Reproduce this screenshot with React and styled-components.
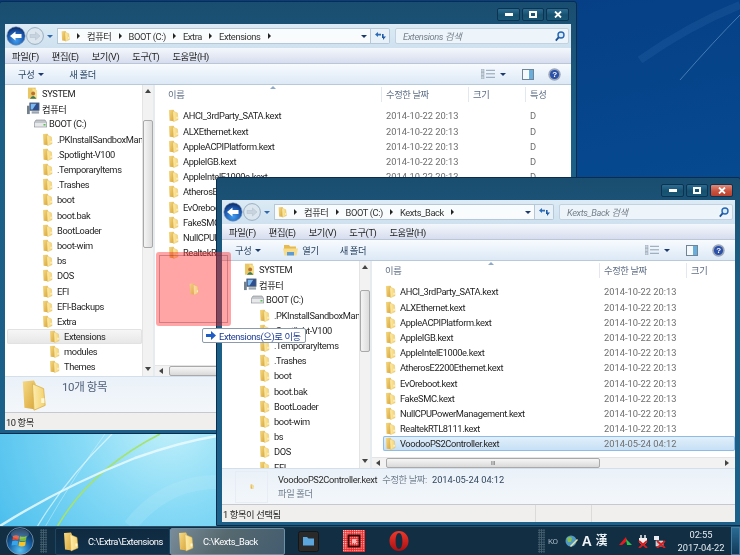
import React from 'react';
import styled, { createGlobalStyle } from 'styled-components';

const GlobalStyle = createGlobalStyle`
  html, body { margin: 0; padding: 0; background: #10304a; }
  body { font-family: Roboto, "Noto Sans CJK KR", sans-serif; font-size: 9.3px; letter-spacing: -0.38px; color: #1e1e1e; }
  * { box-sizing: border-box; }
  svg { display: block; flex: none; }
`;

const Desktop = styled.div`
  width: 740px;
  height: 555px;
  display: flex;
  flex-direction: column;
  overflow: hidden;
  filter: blur(0.3px);
`;

const Wallpaper = styled.div`
  position: relative;
  flex: 1;
  background:
    radial-gradient(circle 380px at 170px 420px, #c4f1fb 0%, #86daf6 24%, #45bcec 56%, #2aa8e2 74%, rgba(20, 130, 205, 0) 100%),
    linear-gradient(170deg, #063a80 0%, #06498f 45%, #0561b6 100%);
`;

const WallpaperArt = styled.svg`
  position: absolute;
  inset: 0;
`;

const WindowFrame = styled.section`
  position: absolute;
  left: ${(p) => p.$left}px;
  top: ${(p) => p.$top}px;
  width: ${(p) => p.$width}px;
  height: ${(p) => p.$height}px;
  display: flex;
  flex-direction: column;
  padding: 0 5px 3px;
  background: linear-gradient(180deg, #1a4e70 0%, #1c5f86 30%, #1b6089 100%);
  border: 1px solid #0b2c4c;
  border-radius: 3px 3px 0 0;
`;

const TitleBar = styled.div`
  height: 22px;
  flex: none;
  display: flex;
  justify-content: flex-end;
  align-items: flex-start;
  gap: 2px;
  padding: 6px 2px 0 0;
`;

const CaptionButton = styled.div`
  width: ${(p) => (p.$wide ? 23 : 22)}px;
  height: 13px;
  display: flex;
  align-items: center;
  justify-content: center;
  border: 1px solid #0d3350;
  border-radius: 2px;
  color: #fff;
  background: ${(p) =>
    p.$danger
      ? 'linear-gradient(180deg, #e08a7a 0%, #c9533f 55%, #b9402c 100%)'
      : 'linear-gradient(180deg, #2c6d92 0%, #17506f 55%, #1a5777 100%)'};
`;

const AddressRow = styled.div`
  height: 24px;
  flex: none;
  display: flex;
  align-items: center;
  padding: 0 2px 0 0;
  background: linear-gradient(180deg, #dcebf5 0%, #cfe1ef 100%);
`;

const NavButtons = styled.div`
  width: 52px;
  flex: none;
  display: flex;
  align-items: center;
  padding-left: 1px;
`;

const AddressField = styled.div`
  flex: 1;
  height: 16px;
  display: flex;
  align-items: center;
  gap: 7px;
  padding: 0 3px 0 3px;
  background: rgba(255, 255, 255, 0.85);
  border: 1px solid #b6c8d8;
  color: #333;
  overflow: hidden;
`;

const Crumb = styled.span`
  white-space: nowrap;
`;

const CrumbArrow = styled.i`
  width: 0;
  height: 0;
  border-left: 3px solid #222;
  border-top: 3px solid transparent;
  border-bottom: 3px solid transparent;
`;

const Spacer = styled.div`
  flex: 1;
`;

const DropTriangle = styled.i`
  width: 0;
  height: 0;
  flex: none;
  margin-left: ${(p) => p.$gap || 0}px;
  border-top: 3px solid ${(p) => p.$color || '#1c3a6e'};
  border-left: 3px solid transparent;
  border-right: 3px solid transparent;
`;

const RefreshButton = styled.div`
  width: 19px;
  height: 16px;
  flex: none;
  display: flex;
  align-items: center;
  justify-content: center;
  background: #e8f1f8;
  border: 1px solid #b6c8d8;
  border-left: 0;
  border-radius: 0 2px 2px 0;
`;

const SearchField = styled.div`
  width: 174px;
  height: 16px;
  flex: none;
  display: flex;
  align-items: center;
  justify-content: space-between;
  margin-left: 5px;
  padding: 0 3px 0 7px;
  background: #eef5fa;
  border: 1px solid #c2d2e0;
  border-radius: 2px;
  color: #77818c;
  font-style: italic;
`;

const MenuBar = styled.nav`
  height: 16px;
  flex: none;
  display: flex;
  align-items: center;
  gap: 13px;
  padding-left: 7px;
  background: linear-gradient(180deg, #f4f7fc 0%, #d7ddee 100%);
  border-bottom: 1px solid #b9c7d8;
  color: #222;
`;

const Toolbar = styled.div`
  height: 21px;
  flex: none;
  display: flex;
  align-items: center;
  padding: 0 10px 0 13px;
  background: linear-gradient(180deg, #f8fbfe 0%, #dce9f6 100%);
  border-bottom: 1px solid #b8c9da;
  color: #2b4563;
`;

const ToolItem = styled.div`
  display: flex;
  align-items: center;
  gap: 4px;
  margin-right: ${(p) => p.$gap}px;
`;

const ToolIcons = styled.div`
  margin-left: auto;
  display: flex;
  align-items: center;
  gap: 5px;
`;

const PaneIconWrap = styled.div`
  margin-left: 11px;
  margin-right: 9px;
  display: flex;
`;

const Body = styled.div`
  flex: 1;
  min-height: 0;
  display: flex;
  background: #fff;
`;

const NavPane = styled.div`
  width: 137px;
  flex: none;
  overflow: hidden;
  padding-top: 1px;
`;

const NavRow = styled.div`
  height: 15.2px;
  display: flex;
  align-items: center;
  margin-left: 2px;
  padding-left: ${(p) => p.$indent - 2}px;
  white-space: nowrap;
  border-radius: 2px;
  background: ${(p) => (p.$selected ? 'linear-gradient(180deg, #f7f7f7, #e6e6e6)' : 'transparent')};
  box-shadow: ${(p) => (p.$selected ? 'inset 0 0 0 1px #e2e2e2' : 'none')};
`;

const IconSlot = styled.span`
  width: 15px;
  height: 14px;
  flex: none;
  display: flex;
  align-items: center;
`;

const VScroll = styled.div`
  width: 11px;
  flex: none;
  display: flex;
  flex-direction: column;
  background: #f2f2f2;
  border-left: 1px solid #e4e4e4;
`;

const ScrollCap = styled.div`
  flex: none;
  height: 13px;
  display: flex;
  align-items: center;
  justify-content: center;
`;

const VTrack = styled.div`
  flex: 1;
  padding-top: ${(p) => p.$offset}px;
`;

const VThumb = styled.div`
  height: ${(p) => p.$length}px;
  background: linear-gradient(90deg, #f4f4f4, #dcdcdc);
  border: 1px solid #a9a9a9;
  border-radius: 2px;
`;

const Splitter = styled.div`
  width: 2px;
  flex: none;
  background: #e6ebf0;
`;

const ListPane = styled.div`
  flex: 1;
  min-width: 0;
  display: flex;
  flex-direction: column;
`;

const ListHeader = styled.div`
  height: 23.4px;
  flex: none;
  display: grid;
  grid-template-columns: ${(p) => p.$columns};
  align-items: start;
  color: #5f6f85;
`;

const HeaderCell = styled.div`
  position: relative;
  height: 15px;
  margin-top: 2px;
  line-height: 15px;
  padding-left: ${(p) => (p.$first ? 13 : 4)}px;
  border-left: ${(p) => (p.$first ? '0' : '1px solid #e3e8f0')};
`;

const SortArrow = styled.i`
  position: absolute;
  top: -1px;
  left: 50%;
  margin-left: 2px;
  width: 0;
  height: 0;
  border-bottom: 3px solid #8fa9c9;
  border-left: 3px solid transparent;
  border-right: 3px solid transparent;
`;

const FileRows = styled.div`
  flex: 1;
  min-height: 0;
  overflow: hidden;
`;

const FileRow = styled.div`
  height: 15.2px;
  display: grid;
  grid-template-columns: ${(p) => p.$columns};
  align-items: center;
  margin-left: 11px;
  padding-left: 2px;
  white-space: nowrap;
  background: ${(p) => (p.$selected ? 'linear-gradient(180deg, #e3f0fb, #c5dff5)' : 'transparent')};
  box-shadow: ${(p) => (p.$selected ? 'inset 0 0 0 1px #8fbce4' : 'none')};
  border-radius: 2px;
`;

const NameCell = styled.div`
  display: flex;
  align-items: center;
  overflow: hidden;
`;

const DimCell = styled.div`
  padding-left: 5px;
  color: #6e6e6e;
  letter-spacing: 0;
`;

const HScroll = styled.div`
  height: 11px;
  flex: none;
  display: flex;
  align-items: stretch;
  background: #f2f2f2;
  border-top: 1px solid #e4e4e4;
`;

const HTrack = styled.div`
  flex: 1;
  display: flex;
`;

const HThumb = styled.div`
  width: ${(p) => p.$length}px;
  background: linear-gradient(180deg, #f6f6f6, #d9d9d9);
  border: 1px solid #a9a9a9;
  border-radius: 2px;
  text-align: center;
  line-height: 7px;
  font-size: 6px;
  color: #666;
`;

const HCap = styled.div`
  width: 14px;
  flex: none;
  display: flex;
  align-items: center;
  justify-content: center;
`;

const DetailsPane = styled.div`
  height: 37px;
  flex: none;
  display: flex;
  align-items: center;
  background: linear-gradient(180deg, #eaf1f8 0%, #f3f7fb 100%);
  border-top: 1px solid #d5dfe9;
  border-bottom: 1px solid #c4c9ce;
`;

const Thumb = styled.div`
  width: 57px;
  height: 100%;
  flex: none;
  display: flex;
  align-items: center;
  justify-content: center;
`;

const TinyThumb = styled.div`
  width: 33px;
  height: 32px;
  margin-left: 13px;
  margin-right: 10px;
  flex: none;
  display: flex;
  align-items: center;
  justify-content: center;
  border: 1px solid #e6edf4;
`;

const DetailTitle = styled.div`
  display: flex;
  gap: 5px;
  color: ${(p) => p.$color || '#2b2b2b'};
  font-size: ${(p) => p.$size || 9.3}px;
  margin-bottom: ${(p) => p.$space || 0}px;
`;

const DetailText = styled.div`
  display: flex;
  flex-direction: column;
  gap: 2px;
  line-height: 12px;
`;

const Dim = styled.span`
  color: #74808f;
`;

const Fact = styled.span`
  color: #33475f;
  letter-spacing: 0;
`;

const StatusBar = styled.div`
  height: 17px;
  flex: none;
  display: grid;
  grid-template-columns: ${(p) => p.$columns};
  align-items: stretch;
  background: #f0efed;
  color: #222;
`;

const StatusCell = styled.div`
  display: flex;
  align-items: center;
  padding-left: 1px;
  border-left: ${(p) => (p.$line ? '1px solid #dcdbd8' : '0')};
`;

const DragGhost = styled.div`
  position: absolute;
  left: 156px;
  top: 252px;
  width: 75px;
  height: 74px;
  padding: 3px;
  background: rgba(255, 40, 40, 0.42);
  border-radius: 3px;
`;

const DragGhostInner = styled.div`
  width: 100%;
  height: 100%;
  display: flex;
  align-items: center;
  justify-content: center;
  border: 1px solid rgba(110, 40, 50, 0.4);
  opacity: 0.8;
`;

const DragTip = styled.div`
  position: absolute;
  left: 202px;
  top: 328px;
  height: 15px;
  padding: 0 4px 0 3px;
  display: flex;
  align-items: center;
  gap: 3px;
  white-space: nowrap;
  color: #1b3a96;
  background: #fff;
  border: 1px solid #8b9bab;
  border-radius: 2px;
`;

const Taskbar = styled.footer`
  height: 29px;
  flex: none;
  display: flex;
  align-items: center;
  background: #122e43;
  border-top: 1px solid #26506c;
  color: #fff;
`;

const StartOrb = styled.div`
  width: 40px;
  flex: none;
  display: flex;
  justify-content: center;
`;

const Gripper = styled.div`
  width: 7px;
  height: 24px;
  flex: none;
  background-image: radial-gradient(circle, #46606f 0.8px, transparent 1px);
  background-size: 2.4px 2.4px;
`;

const TaskButton = styled.div`
  width: 115px;
  height: 27px;
  flex: none;
  display: flex;
  align-items: center;
  gap: 9px;
  padding-left: 7px;
  border: 1px solid ${(p) => (p.$active ? '#6d90a6' : '#1f4660')};
  border-radius: 2px;
  background: ${(p) =>
    p.$active
      ? 'linear-gradient(125deg, #7a8c99 0%, #56696f 45%, #435c70 100%)'
      : 'linear-gradient(180deg, #0f2a40 0%, #10304a 100%)'};
`;

const TaskButtons = styled.div`
  margin-left: 8px;
  display: flex;
`;

const PinnedApps = styled.div`
  margin-left: 13px;
  display: flex;
  gap: 24px;
  align-items: center;
`;

const Tray = styled.div`
  margin-left: auto;
  display: flex;
  align-items: center;
  height: 100%;
`;

const TrayIcons = styled.div`
  display: flex;
  align-items: center;
  margin-left: 3px;
  gap: 4px;
`;

const LangLabel = styled.span`
  font-size: 8px;
  color: #a9b8c4;
  margin-right: 3px;
`;

const LangGlyph = styled.span`
  font-family: "Liberation Sans", "Noto Sans CJK TC", sans-serif;
  font-weight: 700;
  font-size: ${(p) => p.$size}px;
  color: #eef3f7;
  line-height: 1;
`;

const TrayBreak = styled.span`
  width: 4px;
`;

const Clock = styled.div`
  width: 58px;
  margin-left: 6px;
  text-align: center;
  line-height: 13px;
  letter-spacing: 0;
  color: #e6edf2;
`;

const ShowDesktop = styled.div`
  width: 9px;
  height: 100%;
  margin-left: 1px;
  background: linear-gradient(180deg, #2a6a94 0%, #123a58 100%);
  border: 1px solid #3f7ea6;
`;

const FolderIcon = ({ w = 11, h = 13, id = 'f' }) => (
  <svg width={w} height={h} viewBox="0 0 16 20">
    <defs>
      <linearGradient id={`${id}b`} x1="0" y1="0" x2="1" y2="1">
        <stop offset="0" stopColor="#f5da85" />
        <stop offset="1" stopColor="#d9a63a" />
      </linearGradient>
      <linearGradient id={`${id}a`} x1="0" y1="0" x2="1" y2="0">
        <stop offset="0" stopColor="#fcedb0" />
        <stop offset="1" stopColor="#f4d06c" />
      </linearGradient>
    </defs>
    <path d="M1 1.5 L8 1 L9 3 L9 19 L2 18 Z" fill={`url(#${id}b)`} />
    <path d="M7 3 L14 6 L15 16.5 L8 19.5 Z" fill={`url(#${id}a)`} stroke="#d9b04b" strokeWidth="0.5" />
    <path d="M12.5 12 h2 v3 h-2 z" fill="#fff7d3" />
  </svg>
);

const SystemIcon = () => (
  <svg width="11" height="13" viewBox="0 0 16 20">
    <path d="M1 1 L13 1 L13 18 L1 18 Z" fill="#eac766" />
    <path d="M8 2 L15 5 L15 18 L8 19 Z" fill="#f7e08f" />
    <circle cx="9" cy="10" r="3" fill="#b8742e" />
    <path d="M4 18 Q9 10 14 18 Z" fill="#3e7a4e" />
  </svg>
);

const ComputerIcon = () => (
  <svg width="13" height="13" viewBox="0 0 14 14">
    <rect x="3" y="1" width="10" height="8" fill="#2f4e8e" stroke="#5a6a7a" strokeWidth="0.8" />
    <path d="M4 2 h6 l-4 6 h-2 z" fill="#7bb8ee" />
    <rect x="0" y="4" width="3" height="9" fill="#74808c" />
    <rect x="5" y="10" width="8" height="2.5" fill="#9aa5b0" />
  </svg>
);

const DriveIcon = () => (
  <svg width="13" height="9" viewBox="0 0 13 9">
    <path d="M2 1 h9 l2 3 v4 h-13 v-4 z" fill="#c3c7cb" stroke="#7f878e" strokeWidth="0.6" />
    <rect x="1" y="4" width="11" height="3.5" fill="#e6e8ea" />
    <rect x="9.5" y="5" width="2" height="1.5" fill="#55c24a" />
  </svg>
);

const BackButton = () => (
  <svg width="20" height="20" viewBox="0 0 20 20">
    <defs>
      <radialGradient id="backorb" cx="50%" cy="75%" r="70%">
        <stop offset="0" stopColor="#3f9cf0" />
        <stop offset="0.7" stopColor="#1a54a8" />
        <stop offset="1" stopColor="#0e2f6c" />
      </radialGradient>
    </defs>
    <circle cx="10" cy="10" r="9.2" fill="url(#backorb)" stroke="#7d97b5" strokeWidth="0.6" />
    <path d="M4 10 L9.5 5.5 V8 H15.5 V12 H9.5 V14.5 Z" fill="#fff" />
  </svg>
);

const ForwardButton = () => (
  <svg width="18" height="18" viewBox="0 0 18 18">
    <circle cx="9" cy="9" r="8.4" fill="#dbe6ef" stroke="#93a8bc" strokeWidth="0.9" />
    <path d="M14 9 L9.5 5 V7.5 H4 V10.5 H9.5 V13 Z" fill="#c7d4df" stroke="#a9b9c6" strokeWidth="0.4" />
  </svg>
);

const RefreshIcon = () => (
  <svg width="11" height="10" viewBox="0 0 11 10">
    <path d="M0 3.5 L3 1 V2.8 H6 V4.4 H3 V6 Z" fill="#2b6dbb" />
    <path d="M11 5.5 L8 9 V7 H7 V3 H8.6 V5.5 Z" fill="#1e5aa5" />
  </svg>
);

const SearchIcon = () => (
  <svg width="10" height="11" viewBox="0 0 10 11">
    <circle cx="6" cy="4" r="3" fill="#dcebf7" stroke="#2367b5" strokeWidth="1.4" />
    <path d="M3.6 6.4 L0.8 9.6" stroke="#1a4f94" strokeWidth="1.8" />
  </svg>
);

const OpenIcon = () => (
  <svg width="15" height="12" viewBox="0 0 15 12">
    <path d="M1 1 h5 l1 1.5 h6 v3 h-12 z" fill="#e7b94f" />
    <path d="M0 4.5 h15 l-1.5 7 h-12 z" fill="#f7dc8c" />
    <path d="M4 8 h7 v3.5 h-7 z" fill="#5b9bd8" />
  </svg>
);

const ViewsIcon = () => (
  <svg width="14" height="10" viewBox="0 0 14 10">
    {[0, 3.5, 7].map((y) => (
      <g key={y}>
        <rect x="0" y={y} width="3" height="3" fill="#c8d4de" stroke="#8f9eac" strokeWidth="0.5" />
        <rect x="5" y={y + 0.8} width="9" height="1" fill="#8ea0b2" />
      </g>
    ))}
  </svg>
);

const PreviewIcon = () => (
  <svg width="12" height="11" viewBox="0 0 12 11">
    <rect x="0.5" y="0.5" width="11" height="10" fill="#f5f9fc" stroke="#6f8496" />
    <rect x="7" y="1" width="4" height="9" fill="#69aeda" />
  </svg>
);

const HelpIcon = () => (
  <svg width="13" height="13" viewBox="0 0 13 13">
    <circle cx="6.5" cy="6.5" r="6.2" fill="#9aa6b8" />
    <circle cx="6.5" cy="6.5" r="4.6" fill="#2b50a8" />
    <text x="6.5" y="9.4" textAnchor="middle" fontSize="8" fontWeight="700" fontFamily="Liberation Sans, sans-serif" fill="#fff">?</text>
  </svg>
);

const ScrollTriangle = ({ dir }) => {
  const points = {
    up: '0,4 3,0 6,4',
    down: '0,0 6,0 3,4',
    left: '4,0 4,6 0,3',
    right: '0,0 0,6 4,3',
  };
  return (
    <svg width="6" height="6" viewBox="0 0 6 6">
      <polygon points={points[dir]} fill="#444" />
    </svg>
  );
};

const StartIcon = () => (
  <svg width="28" height="28" viewBox="0 0 28 28">
    <defs>
      <radialGradient id="orb" cx="50%" cy="85%" r="75%">
        <stop offset="0" stopColor="#58c1f0" />
        <stop offset="0.55" stopColor="#1763a8" />
        <stop offset="1" stopColor="#0a2c50" />
      </radialGradient>
    </defs>
    <circle cx="14" cy="14" r="13.4" fill="url(#orb)" stroke="#8fa9bc" strokeWidth="0.7" />
    <path d="M7 9 Q10 7.5 13 9 L12.4 13.4 Q9.6 12 6.4 13.4 Z" fill="#e2492d" />
    <path d="M14 9.2 Q17 10.6 20.6 9 L20 13.4 Q16.6 15 13.4 13.6 Z" fill="#7cba2d" />
    <path d="M6.2 14.2 Q9.4 12.8 12.2 14.2 L11.6 18.6 Q8.8 17.2 5.6 18.6 Z" fill="#3aa4e8" />
    <path d="M13.2 14.4 Q16.4 15.8 19.8 14.2 L19.2 18.6 Q16 20.2 12.6 18.8 Z" fill="#f6c32a" />
    <ellipse cx="14" cy="7" rx="9" ry="5" fill="#fff" opacity="0.18" />
  </svg>
);

const ExplorerPin = () => (
  <svg width="21" height="21" viewBox="0 0 21 21">
    <rect x="0.5" y="0.5" width="20" height="20" rx="2" fill="#2a2a2a" stroke="#161616" />
    <path d="M5 6 h4 l1.5 1.5 h5.5 v7 h-11 z" fill="#5ba6dc" />
  </svg>
);

const GridPin = () => (
  <svg width="22" height="22" viewBox="0 0 22 22">
    <defs>
      <pattern id="dots" width="2.2" height="2.2" patternUnits="userSpaceOnUse">
        <rect width="1.1" height="1.1" fill="#ffd8d8" />
      </pattern>
    </defs>
    <rect width="22" height="22" fill="#f02a2a" />
    <rect width="22" height="22" fill="url(#dots)" />
    <rect x="5.5" y="5.5" width="11" height="11" fill="none" stroke="#3a0808" strokeWidth="2" />
    <rect x="9" y="9" width="4" height="4" fill="#ffb4b4" />
  </svg>
);

const OperaPin = () => (
  <svg width="20" height="22" viewBox="0 0 20 22">
    <defs>
      <linearGradient id="opera" x1="0" y1="0" x2="0" y2="1">
        <stop offset="0" stopColor="#f0392c" />
        <stop offset="1" stopColor="#a90f12" />
      </linearGradient>
    </defs>
    <path
      fillRule="evenodd"
      d="M10 1 C15.5 1 19.5 5.5 19.5 11 C19.5 16.5 15.5 21 10 21 C4.5 21 0.5 16.5 0.5 11 C0.5 5.5 4.5 1 10 1 Z M10 3 C7.8 3 6.6 6.5 6.6 11 C6.6 15.5 7.8 19 10 19 C12.2 19 13.4 15.5 13.4 11 C13.4 6.5 12.2 3 10 3 Z"
      fill="url(#opera)"
    />
  </svg>
);

const GlobeTray = () => (
  <svg width="13" height="13" viewBox="0 0 13 13">
    <circle cx="6" cy="6" r="5.5" fill="#4f9ac4" />
    <path d="M2 3 Q5 1 7 3 L6 7 L3 7 Z" fill="#8cc04b" />
    <path d="M5 11 L12 4 L13 5 L6 12 Z" fill="#f3e3a2" />
  </svg>
);

const SignalTray = () => (
  <svg width="14" height="10" viewBox="0 0 14 10">
    <path d="M0 9 L7 1 L8 5 L3 9 Z" fill="#e8191d" />
    <path d="M7 3 L13 9 L8 9 Z" fill="#2bc24a" />
  </svg>
);

const PlugTray = () => (
  <svg width="12" height="13" viewBox="0 0 12 13">
    <path d="M4 0 v3 M8 0 v3" stroke="#fff" strokeWidth="1.4" />
    <path d="M2 3 h8 v4 l-2.5 2.5 h-3 l-2.5 -2.5 z" fill="#f2f2f2" />
    <path d="M2 6 L10 13 M10 6 L2 13" stroke="#e01c1c" strokeWidth="1.8" />
  </svg>
);

const NetTray = () => (
  <svg width="13" height="13" viewBox="0 0 13 13">
    <rect x="1" y="1" width="5" height="4" fill="#e8edf2" />
    <rect x="3" y="6" width="7" height="5" fill="#b9c7d2" stroke="#f1f5f8" strokeWidth="0.6" />
    <path d="M4 6 L12 13 M12 6 L4 13" stroke="#e01c1c" strokeWidth="1.8" />
  </svg>
);

const folderNames = ['.PKInstallSandboxMan', '.Spotlight-V100', '.TemporaryItems', '.Trashes', 'boot', 'boot.bak', 'BootLoader', 'boot-wim', 'bs', 'DOS', 'EFI'];

const backNav = [...folderNames, 'EFI-Backups', 'Extra'];

const kextNames = ['AHCI_3rdParty_SATA.kext', 'ALXEthernet.kext', 'AppleACPIPlatform.kext', 'AppleIGB.kext', 'AppleIntelE1000e.kext', 'AtherosE2200Ethernet.kext', 'EvOreboot.kext', 'FakeSMC.kext', 'NullCPUPowerManagement.kext', 'RealtekRTL8111.kext'];

const menus = ['파일(F)', '편집(E)', '보기(V)', '도구(T)', '도움말(H)'];

const ExplorerWindow = ({ id, box, active, crumbs, searchLabel, navChildren, navItems, thumbOffset, thumbLength, nameWidth, headers, files, hScroll, hasOpen, details, status, statusColumns }) => {
  const columns = `${nameWidth}px 87px 57px 1fr`;
  const rowColumns = `${nameWidth - 13}px 87px 57px 1fr`;

  return (
    <WindowFrame $left={box.left} $top={box.top} $width={box.width} $height={box.height}>
      <TitleBar>
        <CaptionButton $wide>
          <svg width="8" height="3"><rect width="8" height="3" fill="#fff" /></svg>
        </CaptionButton>
        <CaptionButton>
          <svg width="8" height="7"><rect x="1" y="1" width="6" height="5" fill="none" stroke="#fff" strokeWidth="2" /></svg>
        </CaptionButton>
        <CaptionButton $wide $danger={active}>
          <svg width="8" height="7"><path d="M1 0.5 L7 6.5 M7 0.5 L1 6.5" stroke="#fff" strokeWidth="1.8" /></svg>
        </CaptionButton>
      </TitleBar>
      <AddressRow>
        <NavButtons>
          <BackButton />
          <ForwardButton />
          <DropTriangle $color="#2d6ab0" $gap={3} />
        </NavButtons>
        <AddressField>
          <FolderIcon w={9} h={12} id={`${id}addr`} />
          {crumbs.map((crumb) => (
            <React.Fragment key={crumb}>
              <CrumbArrow />
              <Crumb>{crumb}</Crumb>
            </React.Fragment>
          ))}
          <CrumbArrow />
          <Spacer />
          <DropTriangle />
        </AddressField>
        <RefreshButton><RefreshIcon /></RefreshButton>
        <SearchField>
          <span>{searchLabel}</span>
          <SearchIcon />
        </SearchField>
      </AddressRow>
      <MenuBar>
        {menus.map((menu) => <span key={menu}>{menu}</span>)}
      </MenuBar>
      <Toolbar>
        <ToolItem $gap={hasOpen ? 22 : 25}>구성 <DropTriangle /></ToolItem>
        {hasOpen && <ToolItem $gap={21}><OpenIcon />열기</ToolItem>}
        <ToolItem $gap={0}>새 폴더</ToolItem>
        <ToolIcons>
          <ViewsIcon />
          <DropTriangle />
          <PaneIconWrap><PreviewIcon /></PaneIconWrap>
          <HelpIcon />
        </ToolIcons>
      </Toolbar>
      <Body>
        <NavPane>
          <NavRow $indent={22}><IconSlot><SystemIcon /></IconSlot>SYSTEM</NavRow>
          <NavRow $indent={22}><IconSlot><ComputerIcon /></IconSlot>컴퓨터</NavRow>
          <NavRow $indent={29}><IconSlot><DriveIcon /></IconSlot>BOOT (C:)</NavRow>
          {navItems.map((name) => (
            <NavRow key={name} $indent={37}>
              <IconSlot><FolderIcon id={`${id}n${name}`} /></IconSlot>{name}
            </NavRow>
          ))}
          {navChildren.map((child) => (
            <NavRow key={child.name} $indent={44} $selected={child.selected}>
              <IconSlot><FolderIcon id={`${id}c${child.name}`} /></IconSlot>{child.name}
            </NavRow>
          ))}
        </NavPane>
        <VScroll>
          <ScrollCap><ScrollTriangle dir="up" /></ScrollCap>
          <VTrack $offset={thumbOffset}><VThumb $length={thumbLength} /></VTrack>
          <ScrollCap><ScrollTriangle dir="down" /></ScrollCap>
        </VScroll>
        <Splitter />
        <ListPane>
          <ListHeader $columns={columns}>
            {headers.map((label, i) => (
              <HeaderCell key={label} $first={i === 0}>
                {label}
                {i === 0 && <SortArrow />}
              </HeaderCell>
            ))}
          </ListHeader>
          <FileRows>
            {files.map((file) => (
              <FileRow key={file.name} $columns={rowColumns} $selected={file.selected}>
                <NameCell><IconSlot><FolderIcon id={`${id}r${file.name}`} /></IconSlot>{file.name}</NameCell>
                <DimCell>{file.date}</DimCell>
                <DimCell />
                <DimCell>{file.attr}</DimCell>
              </FileRow>
            ))}
          </FileRows>
          <HScroll>
            <HCap><ScrollTriangle dir="left" /></HCap>
            <HTrack><HThumb $length={hScroll}>III</HThumb></HTrack>
            <HCap><ScrollTriangle dir="right" /></HCap>
          </HScroll>
        </ListPane>
      </Body>
      {details}
      <StatusBar $columns={statusColumns}>
        {status.map((text, i) => <StatusCell key={i} $line={i > 0}>{text}</StatusCell>)}
      </StatusBar>
    </WindowFrame>
  );
};

const backFiles = kextNames.map((name) => ({ name, date: '2014-10-22 20:13', attr: 'D' }));
const frontFiles = [
  ...kextNames.map((name) => ({ name, date: '2014-10-22 20:13' })),
  { name: 'VoodooPS2Controller.kext', date: '2014-05-24 04:12', selected: true },
];

export default function App() {
  return (
    <>
      <GlobalStyle />
      <Desktop>
        <Wallpaper>
          <WallpaperArt width="740" height="526" viewBox="0 0 740 526">
            <path d="M680 80 Q715 40 740 15" stroke="#5f93c8" strokeWidth="1" fill="none" opacity="0.7" />
            <path d="M640 60 Q690 25 740 5" stroke="#2f6cab" strokeWidth="8" fill="none" opacity="0.25" />
            <path d="M57 527 Q90 470 160 434" stroke="#a5e36a" strokeWidth="1.6" fill="none" />
            <path d="M0 526 Q60 488 135 458 Q180 442 217 436" stroke="#eafaff" strokeWidth="2.4" fill="none" opacity="0.85" />
            <path d="M37 527 Q65 480 112 434" stroke="#e8fbff" strokeWidth="1.2" fill="none" opacity="0.7" />
            <path d="M45 527 Q75 475 105 434" stroke="#e8fbff" strokeWidth="0.8" fill="none" opacity="0.5" />
            <path d="M130 526 Q165 482 217 482" stroke="#c8f1fb" strokeWidth="14" fill="none" opacity="0.2" />
          </WallpaperArt>
          <ExplorerWindow
            id="back"
            box={{ left: -1, top: 1, width: 578, height: 433 }}
            crumbs={['컴퓨터', 'BOOT (C:)', 'Extra', 'Extensions']}
            searchLabel="Extensions 검색"
            navItems={backNav}
            navChildren={[{ name: 'Extensions', selected: true }, { name: 'modules' }, { name: 'Themes' }]}
            thumbOffset={22}
            thumbLength={128}
            nameWidth={226}
            headers={['이름', '수정한 날짜', '크기', '특성']}
            files={backFiles}
            hScroll={300}
            details={
              <DetailsPane>
                <Thumb><FolderIcon w={26} h={32} id="backbig" /></Thumb>
                <DetailTitle $color="#51617c" $size={11.5} $space={17}>10개 항목</DetailTitle>
              </DetailsPane>
            }
            status={['10 항목']}
            statusColumns="1fr"
          />
          <ExplorerWindow
            id="front"
            active
            box={{ left: 216, top: 177, width: 525, height: 349 }}
            crumbs={['컴퓨터', 'BOOT (C:)', 'Kexts_Back']}
            searchLabel="Kexts_Back 검색"
            navItems={folderNames}
            navChildren={[]}
            thumbOffset={16}
            thumbLength={62}
            nameWidth={227}
            headers={['이름', '수정한 날짜', '크기', '']}
            files={frontFiles}
            hScroll={214}
            hasOpen
            details={
              <DetailsPane>
                <TinyThumb><FolderIcon w={4} h={5} id="fronttiny" /></TinyThumb>
                <DetailText>
                  <DetailTitle>
                    VoodooPS2Controller.kext
                    <Dim>수정한 날짜:</Dim>
                    <Fact>2014-05-24 04:12</Fact>
                  </DetailTitle>
                  <Dim>파일 폴더</Dim>
                </DetailText>
              </DetailsPane>
            }
            status={['1 항목이 선택됨', '', '']}
            statusColumns="313px 56px 1fr"
          />
          <DragGhost>
            <DragGhostInner><FolderIcon w={10} h={14} id="ghost" /></DragGhostInner>
          </DragGhost>
          <DragTip>
            <svg width="10" height="9" viewBox="0 0 10 9">
              <path d="M0 3 H5 V0 L10 4.5 L5 9 V6 H0 Z" fill="#1f5cc4" />
            </svg>
            Extensions(으)로 이동
          </DragTip>
        </Wallpaper>
        <Taskbar>
          <StartOrb><StartIcon /></StartOrb>
          <Gripper />
          <TaskButtons>
            <TaskButton><FolderIcon w={16} h={21} id="task1" />C:\Extra\Extensions</TaskButton>
            <TaskButton $active><FolderIcon w={16} h={21} id="task2" />C:\Kexts_Back</TaskButton>
          </TaskButtons>
          <PinnedApps>
            <ExplorerPin />
            <GridPin />
            <OperaPin />
          </PinnedApps>
          <Tray>
            <Gripper />
            <TrayIcons>
              <LangLabel>KO</LangLabel>
              <GlobeTray />
              <LangGlyph $size={14}>A</LangGlyph>
              <LangGlyph $size={12}>漢</LangGlyph>
              <TrayBreak />
              <SignalTray />
              <PlugTray />
              <NetTray />
            </TrayIcons>
            <Clock>02:55<br />2017-04-22</Clock>
            <ShowDesktop />
          </Tray>
        </Taskbar>
      </Desktop>
    </>
  );
}
